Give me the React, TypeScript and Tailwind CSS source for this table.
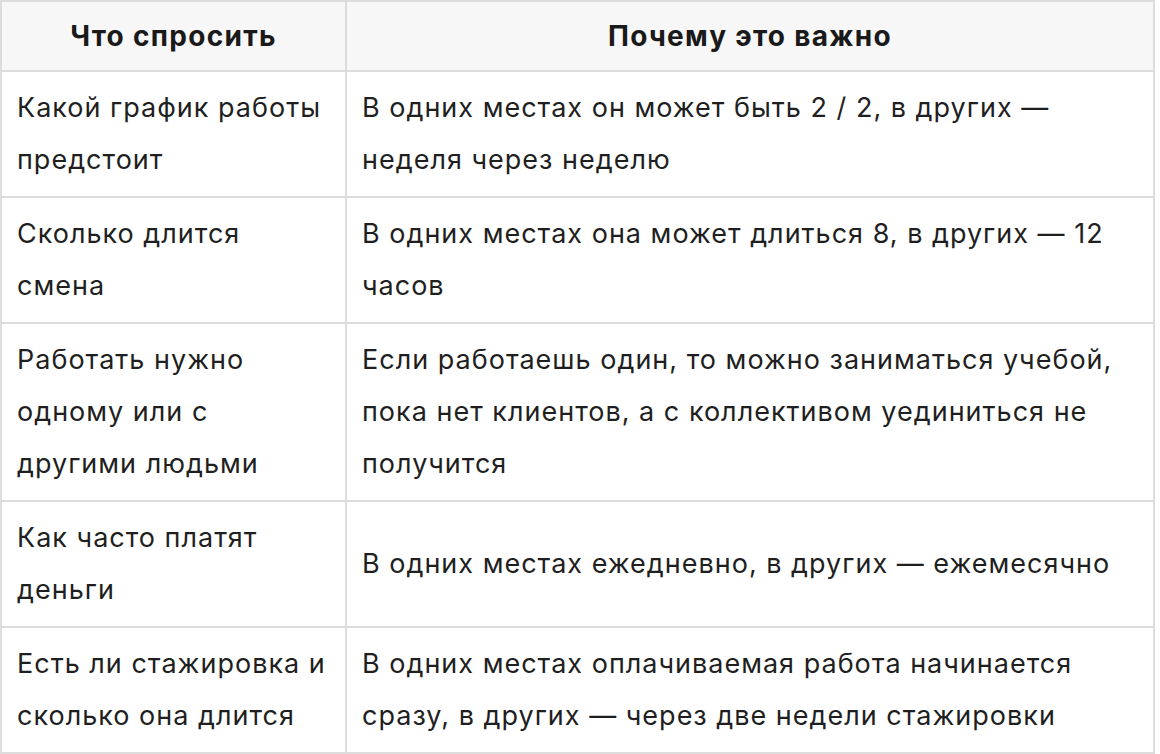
import React from "react";

const rows: [string, string][] = [
  ["Какой график работы предстоит", "В одних местах он может быть 2 / 2, в других — неделя через неделю"],
  ["Сколько длится смена", "В одних местах она может длиться 8, в других — 12 часов"],
  ["Работать нужно одному или с другими людьми", "Если работаешь один, то можно заниматься учебой, пока нет клиентов, а с коллективом уединиться не получится"],
  ["Как часто платят деньги", "В одних местах ежедневно, в других — ежемесячно"],
  ["Есть ли стажировка и сколько она длится", "В одних местах оплачиваемая работа начинается сразу, в других — через две недели стажировки"],
];

export default function App() {
  return (
    <div className="w-[1160px] h-[754px] bg-white overflow-hidden" style={{ fontFamily: "Inter, 'Noto Sans', sans-serif" }}>
      <table className="w-[1155px] border-collapse text-[27px] leading-[52px] tracking-[1px] text-[#1f1f1f] table-fixed">
        <colgroup>
          <col className="w-[345px]" />
          <col />
        </colgroup>
        <thead>
          <tr className="bg-[#f7f7f7] h-[70px]">
            <th className="border-2 border-[#dcdcdc] font-bold text-[28px] tracking-[1.3px] text-center text-[#1a1a1a] px-[15px]">Что спросить</th>
            <th className="border-2 border-[#dcdcdc] font-bold text-[28px] tracking-[1.3px] text-center text-[#1a1a1a] px-[15px]">Почему это важно</th>
          </tr>
        </thead>
        <tbody>
          {rows.map(([a, b], i) => (
            <tr key={i}>
              <td className="border-2 border-[#dcdcdc] align-middle px-[15px] py-[10px]">{a}</td>
              <td className="border-2 border-[#dcdcdc] align-middle px-[15px] py-[10px]">{b}</td>
            </tr>
          ))}
        </tbody>
      </table>
    </div>
  );
}
